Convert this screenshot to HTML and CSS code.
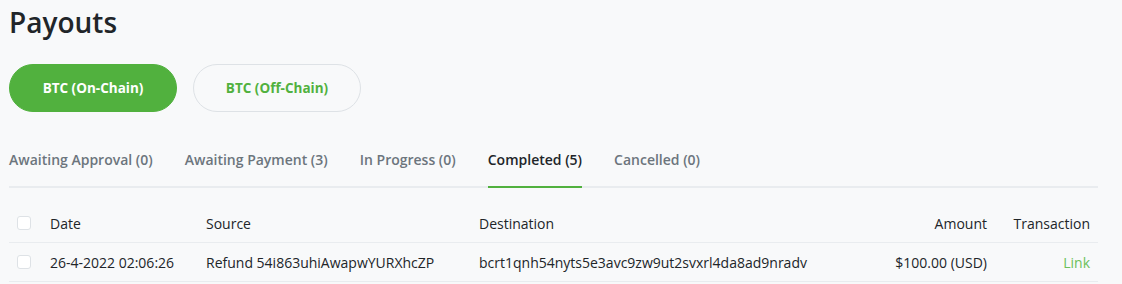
FILE: index.html
```html
<!DOCTYPE html>
<html>
<head>
<meta charset="utf-8">
<link rel="stylesheet" href="styles.css">
</head>
<body>
<main class="page">
  <h1 class="title">Payouts</h1>
  <div class="methods">
    <button class="method method-active">BTC (On-Chain)</button>
    <button class="method">BTC (Off-Chain)</button>
  </div>
  <nav class="tabs">
    <a class="tab">Awaiting Approval (0)</a>
    <a class="tab">Awaiting Payment (3)</a>
    <a class="tab">In Progress (0)</a>
    <a class="tab tab-active">Completed (5)</a>
    <a class="tab">Cancelled (0)</a>
  </nav>
  <div class="table">
    <div class="row head">
      <div class="cell"><span class="check"></span></div>
      <div class="cell">Date</div>
      <div class="cell">Source</div>
      <div class="cell">Destination</div>
      <div class="cell right">Amount</div>
      <div class="cell right">Transaction</div>
    </div>
    <div class="row">
      <div class="cell"><span class="check"></span></div>
      <div class="cell">26-4-2022 02:06:26</div>
      <div class="cell">Refund 54i863uhiAwapwYURXhcZP</div>
      <div class="cell">bcrt1qnh54nyts5e3avc9zw9ut2svxrl4da8ad9nradv</div>
      <div class="cell right">$100.00 (USD)</div>
      <div class="cell right"><a class="link">Link</a></div>
    </div>
  </div>
</main>
</body>
</html>
```
FILE: styles.css
```css
html, body {
  margin: 0;
  padding: 0;
  background: #f8f9fa;
}
body {
  font-family: "Open Sans", "Liberation Sans", sans-serif;
  color: #212529;
}
.page {
  padding: 6px 24px 0 9px;
}
.title {
  margin: 0;
  font-size: 28px;
  line-height: 32px;
  font-weight: 600;
  color: #212529;
}
.methods {
  display: flex;
  gap: 16px;
  margin-top: 26px;
}
.method {
  width: 168px;
  height: 48px;
  border-radius: 24px;
  border: 1px solid #dee2e6;
  background: #f8f9fa;
  color: #51b13e;
  font-family: "Open Sans", "Liberation Sans", sans-serif;
  font-size: 13.5px;
  font-weight: 700;
  padding: 0;
}
.method-active {
  background: #51b13e;
  border-color: #51b13e;
  color: #fff;
}
.tabs {
  display: flex;
  gap: 32px;
  margin-top: 24px;
  border-bottom: 2px solid #e9ecef;
}
.tab {
  padding: 13px 0 16px;
  font-size: 14px;
  line-height: 21px;
  font-weight: 600;
  color: #6c757d;
  border-bottom: 2px solid transparent;
  margin-bottom: -2px;
}
.tab-active {
  color: #212529;
  border-bottom-color: #51b13e;
}
.table {
  margin-top: 16px;
}
.row {
  display: grid;
  grid-template-columns: 33px 156px 273px 1fr 140px 103px;
  border-bottom: 1px solid #e9ecef;
  height: 38px;
  align-items: center;
  font-size: 14px;
  line-height: 21px;
}
.cell {
  padding: 0 8px;
  white-space: nowrap;
}
.right {
  text-align: right;
}
.check {
  display: block;
  width: 12px;
  height: 12px;
  border: 1px solid #dee2e6;
  border-radius: 3px;
  background: #fff;
}
.link {
  color: #6cc05a;
}
```
